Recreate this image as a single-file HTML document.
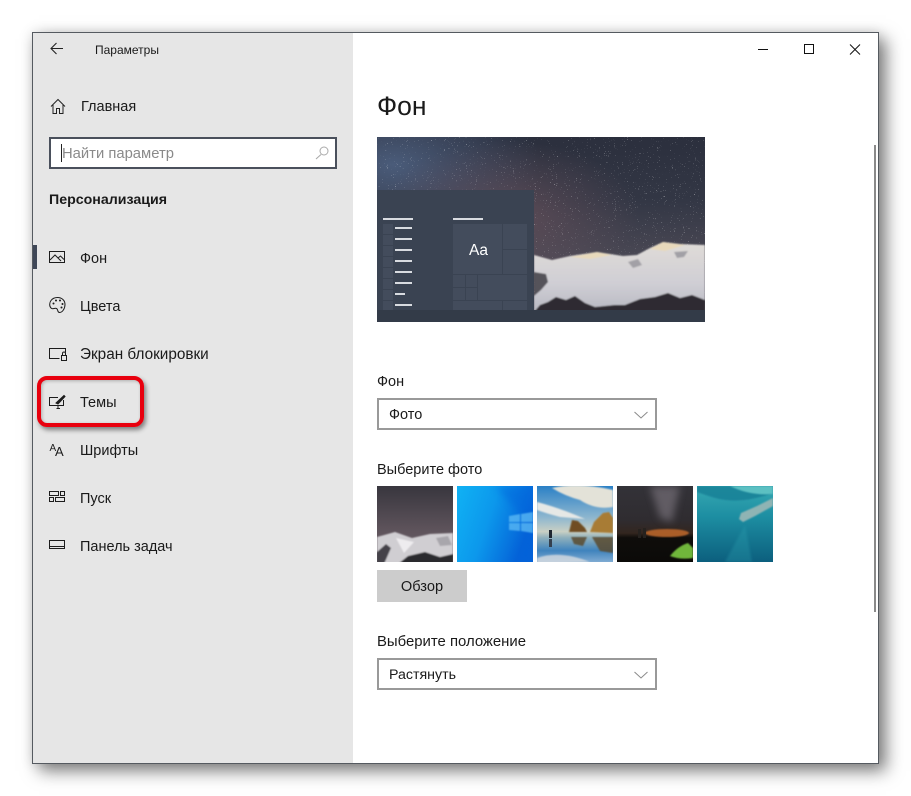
<!DOCTYPE html>
<html lang="ru">
<head>
<meta charset="utf-8">
<title>Параметры</title>
<style>
html,body{margin:0;padding:0;background:#fff;width:911px;height:796px;overflow:hidden}
body{position:relative;font-family:"Liberation Sans","Noto Sans CJK JP",sans-serif;color:#1a1a1a}
.win{position:absolute;left:32px;top:32px;width:845px;height:730px;border:1px solid #555a60;background:#fff;box-shadow:7px 7px 16px rgba(0,0,0,.5),0 0 12px rgba(0,0,0,.1)}
.side{position:absolute;left:33px;top:33px;width:320px;height:730px;background:#e6e6e6}
.t{position:absolute;white-space:nowrap;line-height:20px;font-size:14.5px}
.gfx{position:absolute;left:0;top:0;width:911px;height:796px}
.search{position:absolute;left:49px;top:137px;width:284px;height:28px;border:2px solid #4a505c;background:#fff}
.cursor{position:absolute;left:61px;top:144px;width:1px;height:18px;background:#222}
.dd{position:absolute;left:377px;width:276px;height:28px;border:2px solid #999;background:#fff}
.btn{position:absolute;left:377px;top:570px;width:90px;height:32px;background:#ccc;text-align:center;line-height:34px;font-size:14.6px}
.mark{position:absolute;left:33px;top:245px;width:4px;height:24px;background:#3f4757}
.scroll{position:absolute;left:874px;top:145px;width:2px;height:467px;background:#8a8a8a}
.red{position:absolute;left:37px;top:376px;width:99px;height:43px;border:4px solid #e8000e;border-radius:10px;box-shadow:2px 3px 5px rgba(0,0,0,.45),inset 1px 1px 3px rgba(0,0,0,.25)}
</style>
</head>
<body>
<div class="win"></div>
<div class="side"></div>
<div class="mark"></div>
<div class="scroll"></div>
<div class="search"></div>
<div class="cursor"></div>
<div class="dd" style="top:398px"></div>
<div class="dd" style="top:658px"></div>
<div class="btn">Обзор</div>

<svg class="gfx" viewBox="0 0 911 796" xmlns="http://www.w3.org/2000/svg">
<defs>
<linearGradient id="sky" x1="0" y1="0" x2="0" y2="1">
<stop offset="0" stop-color="#2b2f3d"/><stop offset=".35" stop-color="#333745"/><stop offset=".65" stop-color="#4a4854"/><stop offset="1" stop-color="#5f5660"/>
</linearGradient>
<radialGradient id="blue" cx=".05" cy=".15" r=".45"><stop offset="0" stop-color="#4f6384" stop-opacity=".85"/><stop offset="1" stop-color="#4a5a78" stop-opacity="0"/></radialGradient>
<radialGradient id="pink" cx=".4" cy=".42" r=".4"><stop offset="0" stop-color="#75565f" stop-opacity=".6"/><stop offset="1" stop-color="#6f5560" stop-opacity="0"/></radialGradient>
<linearGradient id="snow" x1="0" y1="0" x2="0" y2="1"><stop offset="0" stop-color="#e0dcd8"/><stop offset=".6" stop-color="#cfced4"/><stop offset="1" stop-color="#b8b8c2"/></linearGradient>
<filter id="stars" x="0" y="0" width="100%" height="100%" color-interpolation-filters="sRGB">
<feTurbulence type="fractalNoise" baseFrequency=".9" numOctaves="2" seed="7"/>
<feColorMatrix type="matrix" values="0 0 0 0 1  0 0 0 0 1  0 0 0 0 1  8 8 0 0 -10.6"/>
</filter>
<linearGradient id="win10" x1="0" y1="0" x2="1" y2=".35"><stop offset="0" stop-color="#10b2f4"/><stop offset=".5" stop-color="#0c98ec"/><stop offset="1" stop-color="#0563d8"/></linearGradient>
<linearGradient id="beach" x1="0" y1="0" x2="0" y2="1"><stop offset="0" stop-color="#2a80c6"/><stop offset=".42" stop-color="#8fb7cf"/><stop offset=".6" stop-color="#c9d0c4"/><stop offset=".68" stop-color="#8fb0bc"/><stop offset=".85" stop-color="#3f83bd"/><stop offset="1" stop-color="#7fabd2"/></linearGradient>
<linearGradient id="night" x1="0" y1="0" x2="0" y2="1"><stop offset="0" stop-color="#333238"/><stop offset=".45" stop-color="#2f2c30"/><stop offset=".62" stop-color="#33261f"/><stop offset=".68" stop-color="#0f0d0b"/><stop offset="1" stop-color="#0b0a08"/></linearGradient>
<linearGradient id="sea" x1="0" y1="0" x2="0" y2="1"><stop offset="0" stop-color="#36a8b2"/><stop offset=".4" stop-color="#1d8ea2"/><stop offset="1" stop-color="#0c5f7e"/></linearGradient>
<linearGradient id="t1" x1="0" y1="0" x2="0" y2="1"><stop offset="0" stop-color="#38363e"/><stop offset=".6" stop-color="#5f545c"/><stop offset="1" stop-color="#6a5f68"/></linearGradient>
<filter id="b05" x="-10%" y="-10%" width="120%" height="120%"><feGaussianBlur stdDeviation=".9"/></filter>
<filter id="b1" x="-20%" y="-20%" width="140%" height="140%"><feGaussianBlur stdDeviation="1.4"/></filter>
<filter id="b3" x="-40%" y="-40%" width="180%" height="180%"><feGaussianBlur stdDeviation="4"/></filter>
<clipPath id="cp"><rect x="377" y="137" width="328" height="185"/></clipPath>
<clipPath id="c1"><rect x="377" y="486" width="76" height="76"/></clipPath>
<clipPath id="c2"><rect x="457" y="486" width="76" height="76"/></clipPath>
<clipPath id="c3"><rect x="537" y="486" width="76" height="76"/></clipPath>
<clipPath id="c4"><rect x="617" y="486" width="76" height="76"/></clipPath>
<clipPath id="c5"><rect x="697" y="486" width="76" height="76"/></clipPath>
</defs>

<!-- Preview -->
<g clip-path="url(#cp)">
<rect x="377" y="137" width="328" height="185" fill="url(#sky)"/>
<rect x="377" y="137" width="328" height="185" fill="url(#blue)"/>
<rect x="377" y="137" width="328" height="185" fill="url(#pink)"/>
<rect x="377" y="137" width="328" height="185" filter="url(#stars)" opacity=".6"/>
<g filter="url(#b05)">
<path d="M534 255 L552 260 L570 256 L597 252 L623 256 L637 255 L650 248 L663 242 L680 244 L705 245 V312 H534Z" fill="url(#snow)"/>
<path d="M570 257 L597 252 L612 255 L590 259Z M650 249 L663 242 L685 245 L665 251Z" fill="#e8d9bb"/>
<path d="M534 272 L546 274 L548 282 L541 290 L534 296Z" fill="#55535a"/>
<path d="M628 262 L638 259 L642 265 L633 268Z M674 252 L688 251 L684 257 L677 258Z" fill="#a2a0a6"/>
<path d="M534 312 L540 305 L548 302 L556 297 L566 300 L575 296 L585 303 L595 307 L615 305 L625 305 L640 299 L655 297 L668 293 L680 298 L692 295 L705 300 V312Z" fill="#2e2c30"/>
</g>
<rect x="377" y="190" width="157" height="120" fill="#3a4352"/>
<rect x="377" y="310" width="328" height="12" fill="#333b48"/>
<g fill="#434c5c">
<rect x="383" y="224" width="10" height="10"/><rect x="383" y="235" width="10" height="10"/><rect x="383" y="246" width="10" height="10"/><rect x="383" y="257" width="10" height="10"/><rect x="383" y="268" width="10" height="10"/><rect x="383" y="279" width="10" height="10"/><rect x="383" y="290" width="10" height="10"/><rect x="383" y="301" width="10" height="9"/>
<rect x="453" y="224" width="49" height="50"/><rect x="503" y="224" width="24" height="25"/><rect x="503" y="250" width="24" height="24"/>
<rect x="453" y="275" width="12" height="12"/><rect x="466" y="275" width="11" height="12"/><rect x="453" y="288" width="12" height="12"/><rect x="466" y="288" width="11" height="12"/><rect x="478" y="275" width="49" height="25"/>
<rect x="453" y="301" width="49" height="9"/><rect x="503" y="301" width="24" height="9"/>
</g>
<g fill="#d8dbe0">
<rect x="383" y="218" width="30" height="2"/><rect x="453" y="218" width="30" height="2"/>
<rect x="395" y="227" width="17" height="2"/><rect x="395" y="238" width="17" height="2"/><rect x="395" y="249" width="17" height="2"/><rect x="395" y="260" width="17" height="2"/><rect x="395" y="271" width="17" height="2"/><rect x="395" y="282" width="17" height="2"/><rect x="395" y="293" width="10" height="2"/><rect x="395" y="304" width="17" height="2"/>
</g>
<text x="469" y="255" font-family="Liberation Sans, sans-serif" font-size="15.5" fill="#fff">Aa</text>
</g>

<!-- Thumb 1 -->
<g clip-path="url(#c1)">
<rect x="377" y="486" width="76" height="76" fill="url(#t1)"/>
<g filter="url(#b05)">
<path d="M377 537 L395 532 L412 538 L430 534 L453 533 V564 H377Z" fill="#d0ced2"/>
<path d="M377 552 L386 544 L391 548 L384 564 H377Z" fill="#45434a"/>
<path d="M398 564 L408 556 L425 552 L440 557 L453 554 V564Z" fill="#2a292e"/>
<path d="M396 538 L404 553 L414 542Z" fill="#eeecef"/>
<path d="M436 538 L448 536 L452 545 L440 546Z" fill="#a8a6ac"/>
</g>
</g>
<!-- Thumb 2 -->
<g clip-path="url(#c2)">
<rect x="457" y="486" width="76" height="76" fill="url(#win10)"/>
<path d="M495 486 L533 486 L533 562 L515 562 L530 525Z" fill="#0560da" opacity=".45" filter="url(#b3)"/>
<g filter="url(#b05)">
<path d="M509 516 L520 514 V522 H509Z M521 514 L533 512 V522 H521Z M509 523 H520 V531 L509 530Z M521 523 H533 V533 L521 531Z" fill="#57b8f4" opacity=".8"/>
</g>
</g>
<!-- Thumb 3 -->
<g clip-path="url(#c3)">
<rect x="537" y="486" width="76" height="76" fill="url(#beach)"/>
<g filter="url(#b05)">
<path d="M552 488 Q578 482 613 490 V507 Q595 510 580 500 Q565 496 552 488Z" fill="#e3e2d8"/>
<path d="M537 502 Q560 508 585 519 L560 517 Q545 513 537 510Z" fill="#e6e8e6"/>
<path d="M569 532 L572 520 L578 521 L585 528 L587 532Z" fill="#6f4e22"/>
<path d="M590 532 L594 522 L603 513 L609 512 L613 518 V533Z" fill="#a87b34"/>
<path d="M571 537 H587 L583 546 L574 544Z M592 537 H613 V553 L600 551Z" fill="#5b4a30" opacity=".85"/>
<path d="M537 558 Q560 550 590 562 L537 564Z" fill="#d6dbe0" opacity=".8"/>
</g>
<rect x="549" y="530" width="3" height="8" fill="#1e2630"/><rect x="549" y="539" width="3" height="8" fill="#34404e"/>
</g>
<!-- Thumb 4 -->
<g clip-path="url(#c4)">
<rect x="617" y="486" width="76" height="76" fill="url(#night)"/>
<path d="M650 486 L680 486 L672 522 L660 518Z" fill="#6d6870" opacity=".8" filter="url(#b3)"/>
<ellipse cx="667" cy="533" rx="22" ry="4" fill="#b8652a" opacity=".9" filter="url(#b05)"/>
<path d="M670 556 Q678 546 688 543 L693 548 V558 Q680 560 670 556Z" fill="#6fb63a" filter="url(#b05)"/>
<rect x="638" y="529" width="3" height="9" fill="#26221f"/><rect x="643" y="528" width="3" height="10" fill="#26221f"/>
</g>
<!-- Thumb 5 -->
<g clip-path="url(#c5)">
<rect x="697" y="486" width="76" height="76" fill="url(#sea)"/>
<path d="M697 486 H773 V493 Q740 505 715 498 Q705 495 697 492Z" fill="#157f96" opacity=".8" filter="url(#b05)"/>
<path d="M730 486 H773 V494 Q750 496 730 486Z" fill="#5cc0c2" filter="url(#b05)"/>
<path d="M739 519 L741 513 L757 506 L773 498 L773 506 L755 516 L743 522Z" fill="#8fb4b4" filter="url(#b05)"/>
<path d="M745 525 L725 562 H752Z" fill="#2fa3b2" opacity=".3" filter="url(#b1)"/>
</g>

<!-- Window controls -->
<path d="M758 49.5H768" stroke="#111" stroke-width="1" fill="none"/>
<rect x="804.5" y="44.5" width="9" height="9" fill="none" stroke="#111"/>
<path d="M850 44.5L860 54.5M860 44.5L850 54.5" stroke="#111" stroke-width="1" fill="none"/>

<!-- back arrow -->
<path d="M63 48.5H51M56.5 43L51 48.5L56.5 54" fill="none" stroke="#222" stroke-width="1.1"/>

<!-- home -->
<path d="M51 106.5L58 99.5L65 106.5M53 105V113.5H56.5V108.5H59.5V113.5H63V105" fill="none" stroke="#222" stroke-width="1"/>

<!-- search -->
<circle cx="324" cy="151" r="4" fill="none" stroke="#aaa"/>
<path d="M321 154.5L316 159" stroke="#aaa" stroke-width="1.1"/>

<!-- dropdown chevrons -->
<path d="M634.5 412L641 418L647.5 412" fill="none" stroke="#8a8a8a"/>
<path d="M634.5 672L641 678L647.5 672" fill="none" stroke="#8a8a8a"/>

<!-- Фон -->
<g fill="none" stroke="#1c1c1c" stroke-width="1">
<rect x="49.5" y="251.5" width="15" height="11"/>
<path d="M50 260L55 255L61 261M58 258L60.5 256L64 259.5"/>
</g>
<!-- Цвета -->
<g fill="none" stroke="#1c1c1c" stroke-width="1">
<path d="M57.5 297.5C62 297.5 65 300.5 65 304.5C65 308.5 62.5 312.5 59.5 312.5C57 312.5 58.5 309.5 56.5 308.5C54.5 307.5 53 310 51 308C49 306 49.5 302.5 51 300.5C52.5 298.5 55 297.5 57.5 297.5Z"/>
</g>
<g fill="#1c1c1c"><circle cx="53.5" cy="303.5" r="1"/><circle cx="56" cy="300.5" r="1"/><circle cx="60" cy="300.5" r="1"/><circle cx="62.5" cy="304" r="1"/><circle cx="61.5" cy="307.5" r="1"/></g>
<!-- Экран блокировки -->
<g fill="none" stroke="#1c1c1c" stroke-width="1">
<path d="M59.5 358.5H49.5V348.5H65.5V352.5"/>
<rect x="61.5" y="355.5" width="5" height="5"/>
<path d="M62.5 355.5V353.5C62.5 351.5 65.5 351.5 65.5 353.5V355.5"/>
</g>
<!-- Темы -->
<g fill="none" stroke="#1c1c1c" stroke-width="1">
<path d="M58 397.5H49.5V405.5H63.5V400"/>
<path d="M56.5 408.5H60M58 405.5V408.5"/>
<path d="M56 403L64 395.5L65 396.5L58 404Z" fill="#1c1c1c"/>
</g>
<!-- Шрифты -->
<text x="49.5" y="451" font-family="Liberation Sans, sans-serif" font-size="10" fill="#1c1c1c">A</text>
<text x="55" y="456" font-family="Liberation Sans, sans-serif" font-size="13" fill="#1c1c1c">A</text>
<!-- Пуск -->
<g fill="none" stroke="#1c1c1c" stroke-width="1">
<rect x="49.5" y="491.5" width="9" height="4"/><rect x="60.5" y="491.5" width="4" height="4"/>
<rect x="49.5" y="497.5" width="4" height="4"/><rect x="55.5" y="497.5" width="9" height="4"/>
</g>
<!-- Панель задач -->
<g fill="none" stroke="#1c1c1c" stroke-width="1">
<rect x="49.5" y="540.5" width="15" height="8"/>
<path d="M49.5 546.5H64.5"/>
</g>
</svg>

<div class="red"></div>

<div class="t" style="left:95px;top:40px;font-size:12px">Параметры</div>
<div class="t" style="left:81px;top:97px">Главная</div>
<div class="t" style="left:62px;top:144px;color:#8a8a8a;font-size:14.8px">Найти параметр</div>
<div class="t" style="left:49px;top:190px;font-weight:bold;font-size:14.2px">Персонализация</div>
<div class="t" style="left:80px;top:249px">Фон</div>
<div class="t" style="left:80px;top:297px">Цвета</div>
<div class="t" style="left:80px;top:345px;font-size:15.3px">Экран блокировки</div>
<div class="t" style="left:80px;top:393px">Темы</div>
<div class="t" style="left:80px;top:441px">Шрифты</div>
<div class="t" style="left:80px;top:489px">Пуск</div>
<div class="t" style="left:80px;top:537px">Панель задач</div>
<div class="t" style="left:377px;top:91px;font-size:26.5px;line-height:30px">Фон</div>
<div class="t" style="left:377px;top:372px">Фон</div>
<div class="t" style="left:389px;top:405px">Фото</div>
<div class="t" style="left:377px;top:460px">Выберите фото</div>
<div class="t" style="left:377px;top:632px;font-size:14.9px">Выберите положение</div>
<div class="t" style="left:389px;top:665px;font-size:14.2px">Растянуть</div>
</body>
</html>
